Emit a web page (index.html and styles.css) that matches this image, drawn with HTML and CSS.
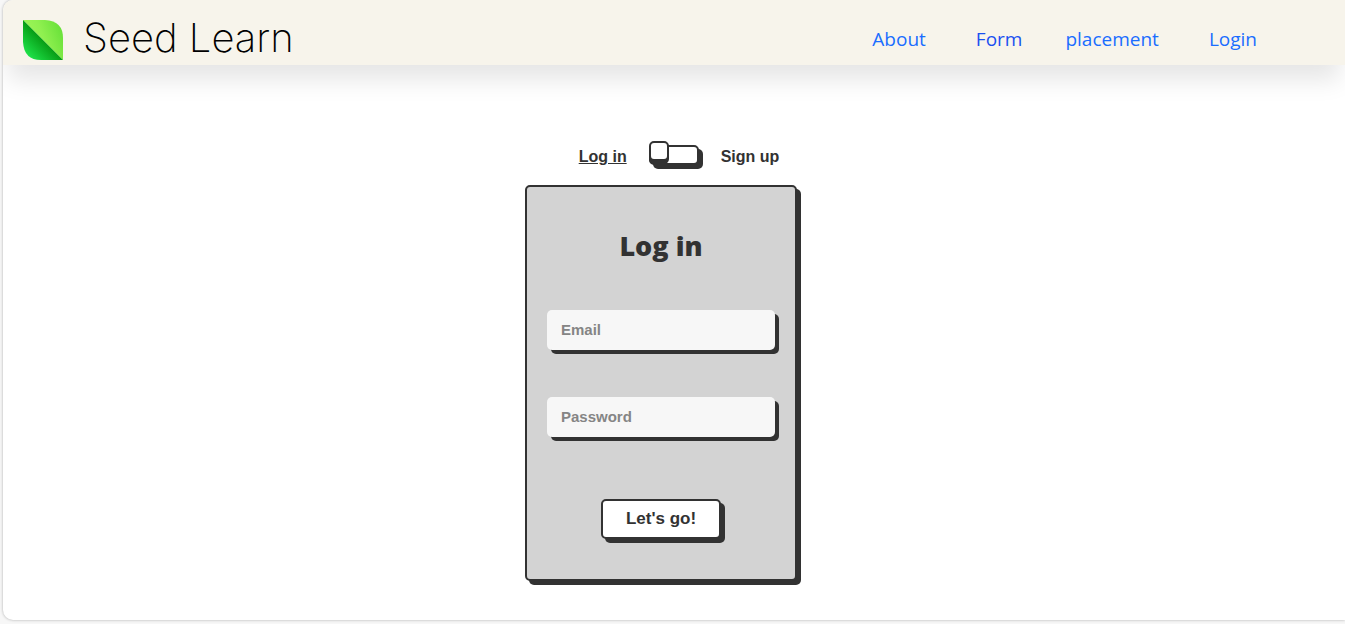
FILE: index.html
```html
<!DOCTYPE html>
<html lang="en">
<head>
<meta charset="utf-8">
<meta name="viewport" content="width=device-width, initial-scale=1">
<title>Seed Learn</title>
<link rel="stylesheet" href="styles.css">
</head>
<body>
<div class="page">
  <header class="header">
    <a class="brand" href="#">
      <svg class="brand-logo" width="40" height="40" viewBox="0 0 40 40" aria-hidden="true">
        <defs>
          <linearGradient id="light" x1="0" y1="0.6" x2="1" y2="0.2">
            <stop offset="0" stop-color="#a5f85c"/>
            <stop offset="0.5" stop-color="#90f050"/>
            <stop offset="1" stop-color="#66e038"/>
          </linearGradient>
          <linearGradient id="dark" gradientUnits="userSpaceOnUse" x1="5" y1="35" x2="22" y2="18">
            <stop offset="0" stop-color="#1ee048"/>
            <stop offset="1" stop-color="#04940f"/>
          </linearGradient>
        </defs>
        <path d="M0 0H22Q40 1 40 18V40Z" fill="url(#light)"/>
        <path d="M0 0V22Q1 40 18 40H40Z" fill="url(#dark)"/>
      </svg>
      <span class="brand-name">Seed Learn</span>
    </a>
    <nav class="nav">
      <a class="nav-link" href="#">About</a>
      <a class="nav-link nav-link-form" href="#">Form</a>
      <a class="nav-link" href="#">placement</a>
      <a class="nav-link" href="#">Login</a>
    </nav>
  </header>
  <main class="main">
    <div class="toggle">
      <label class="toggle-label toggle-label-active" for="mode">Log in</label>
      <input class="switch" type="checkbox" id="mode">
      <label class="toggle-label" for="mode">Sign up</label>
    </div>
    <form class="card">
      <h1 class="card-title">Log in</h1>
      <input class="field" type="email" placeholder="Email" aria-label="Email">
      <input class="field" type="password" placeholder="Password" aria-label="Password">
      <button class="submit" type="button">Let's go!</button>
    </form>
  </main>
</div>
</body>
</html>
```
FILE: styles.css
```css
* {
  box-sizing: border-box;
}

body {
  margin: 0;
  background: #f7f7f7;
  color: #323232;
  font-family: "Liberation Sans", Arial, sans-serif;
}

.page {
  min-height: calc(100vh - 4px);
  margin: 0 0 4px 3px;
  background: #fff;
  border-radius: 10px 0 0 10px;
  box-shadow: 0 0 3px rgba(0, 0, 0, 0.3);
  overflow: hidden;
}

.header {
  display: flex;
  align-items: center;
  justify-content: space-between;
  min-height: 65px;
  padding: 15px 63px 0 20px;
  background: #f7f4eb;
  box-shadow: 0 20px 25px -5px rgba(0, 0, 0, 0.1);
}

.brand {
  display: flex;
  align-items: center;
  gap: 20px;
  color: #000;
  text-decoration: none;
}

.brand-name {
  padding-bottom: 4px;
  font-family: Inter, sans-serif;
  font-size: 40px;
  font-weight: 200;
  line-height: 46px;
}

.nav {
  display: flex;
  align-items: center;
  padding-bottom: 2px;
}

.nav-link {
  padding: 0 25px;
  color: #1a6dff;
  font-family: "Open Sans", sans-serif;
  font-size: 19px;
  line-height: 28px;
  text-decoration: none;
}

.nav-link-form {
  padding-right: 18px;
  color: #1a50f0;
}

.main {
  display: flex;
  flex-direction: column;
  align-items: center;
  padding: 76px 26px 39px 0;
}

.toggle {
  display: flex;
  align-items: flex-start;
  gap: 22px;
  padding-left: 36px;
  margin-bottom: 12px;
}

.toggle-label {
  font-size: 16px;
  font-weight: 700;
  line-height: 32px;
}

.toggle-label-active {
  text-decoration: underline;
}

.switch {
  position: relative;
  width: 50px;
  height: 20px;
  margin: 4px 0 0;
  appearance: none;
  background: #fff;
  border: 2px solid #323232;
  border-radius: 5px;
  box-shadow: 4px 4px #323232;
}

.switch::before {
  content: "";
  position: absolute;
  left: -2px;
  bottom: 2px;
  width: 20px;
  height: 20px;
  box-sizing: border-box;
  background: #fff;
  border: 2px solid #323232;
  border-radius: 5px;
  box-shadow: 0 3px #323232;
}

.switch:checked::before {
  left: 28px;
}

.card {
  display: flex;
  flex-direction: column;
  align-items: center;
  width: 272px;
  padding: 40px 20px;
  background: #d3d3d3;
  border: 2px solid #323232;
  border-radius: 5px;
  box-shadow: 4px 4px #323232;
}

.card-title {
  margin: 0 0 45px;
  font-family: "Open Sans", sans-serif;
  font-size: 27px;
  font-weight: 800;
  line-height: 38px;
}

.field {
  width: 100%;
  height: 40px;
  margin-bottom: 47px;
  padding: 0 14px 2px;
  background: #f7f7f7;
  border: 0;
  border-radius: 5px;
  box-shadow: 4px 4px #323232;
  color: #323232;
  font: 700 15px "Liberation Sans", Arial, sans-serif;
}

.field::placeholder {
  color: #858585;
}

.submit {
  width: 120px;
  height: 40px;
  margin-top: 15px;
  padding: 0;
  background: #fff;
  border: 2px solid #323232;
  border-radius: 5px;
  box-shadow: 4px 4px #323232;
  color: #323232;
  font: 700 17px "Liberation Sans", Arial, sans-serif;
}
```
